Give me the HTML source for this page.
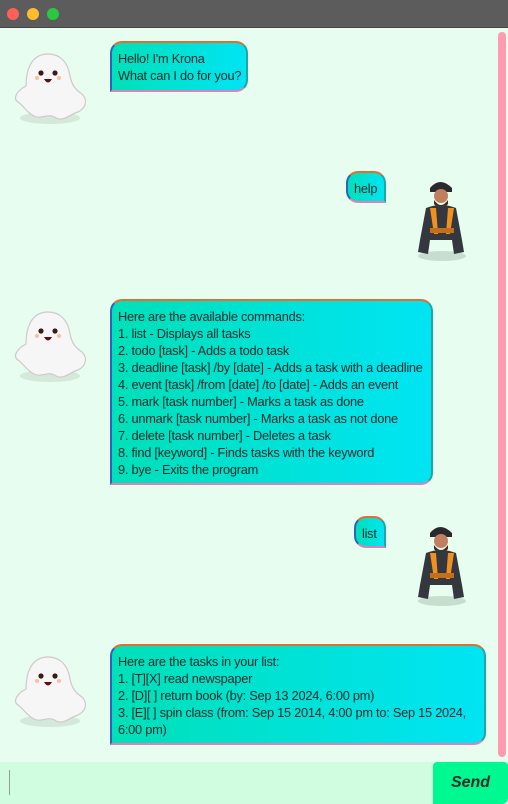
<!DOCTYPE html><html><head><style>
*{margin:0;padding:0;box-sizing:border-box}
body{width:508px;height:804px;background:#e6fdef;font-family:"Liberation Sans",sans-serif;position:relative;overflow:hidden}
.tb{position:absolute;left:0;top:0;width:508px;height:28px;background:#5c5c5c;border-bottom:1px solid #444}
.d{position:absolute;top:8px;width:12px;height:12px;border-radius:50%}
.b{position:absolute;background:linear-gradient(90deg,#00e0b8,#00e4f4);border:2px solid;border-color:#e07030 #20a8a0 #e080b8 #3060c0;border-radius:12px 12px 12px 0;font-size:12.8px;letter-spacing:-0.25px;white-space:nowrap;line-height:17px;color:#1e2a2a;padding:7px 6px}
.r{border-radius:12px 12px 0 12px}
.g{position:absolute}
.m{position:absolute}
</style></head><body>
<div class="tb"><div class="d" style="left:7px;background:#fe5f57"></div><div class="d" style="left:27px;background:#febc2e"></div><div class="d" style="left:47px;background:#28c840"></div></div>
<div style="position:absolute;left:498px;top:32px;width:8px;height:725px;background:#ff9ab0;border-radius:4px"></div>

<svg width="0" height="0" style="position:absolute"><defs>
<g id="ghost"><ellipse cx="42" cy="72" rx="30" ry="6" fill="#c8dccc" opacity=".6"/><path d="M40 8C22 8 18 26 18 40C10 44 4 52 10 56C16 60 18 66 26 70C34 74 40 66 48 72C56 76 62 68 70 66C78 62 80 54 74 48C68 44 64 40 62 30C60 16 52 8 40 8Z" fill="#f6f6f6" stroke="#d0c8cc" stroke-width="1.2"/><circle cx="33" cy="27" r="2.6" fill="#3a1a1a"/><circle cx="47" cy="27" r="2.6" fill="#3a1a1a"/><path d="M36 33Q40 40 44 33Z" fill="#5a1010"/><circle cx="29" cy="32" r="2" fill="#f8c0a0"/><circle cx="51" cy="32" r="2" fill="#f8c0a0"/></g>
<g id="man"><ellipse cx="34" cy="82" rx="24" ry="5" fill="#b8d0c0" opacity=".7"/><path d="M22 14Q32 2 44 14L44 18L22 18Z" fill="#2a2a2e"/><circle cx="33" cy="22" r="7" fill="#c08060"/><path d="M26 26Q33 36 40 26L40 30Q33 38 26 30Z" fill="#4a2a1a"/><path d="M18 34Q33 28 48 34L54 66L56 78L46 80L44 66L22 66L20 80L10 78L12 66Z" fill="#34383e"/><path d="M22 34L26 60L30 60L28 34ZM40 34L38 60L42 60L46 34Z" fill="#f09020"/><rect x="22" y="54" width="24" height="5" fill="#c07018"/></g>
</defs></svg>

<svg class="g" style="left:8px;top:46px" width="90" height="88"><use href="#ghost"/></svg>
<div class="b" style="left:110px;top:41px;width:138px;height:51px">Hello! I'm Krona<br>What can I do for you?</div>

<div class="b r" style="left:346px;top:171px;width:40px;height:32px">help</div>
<svg class="m" style="left:408px;top:174px" width="70" height="92"><use href="#man"/></svg>

<svg class="g" style="left:8px;top:304px" width="90" height="88"><use href="#ghost"/></svg>
<div class="b" style="left:110px;top:299px;width:323px;height:186px">Here are the available commands:<br>1. list - Displays all tasks<br>2. todo [task] - Adds a todo task<br>3. deadline [task] /by [date] - Adds a task with a deadline<br>4. event [task] /from [date] /to [date] - Adds an event<br>5. mark [task number] - Marks a task as done<br>6. unmark [task number] - Marks a task as not done<br>7. delete [task number] - Deletes a task<br>8. find [keyword] - Finds tasks with the keyword<br>9. bye - Exits the program</div>

<div class="b r" style="left:354px;top:516px;width:32px;height:32px">list</div>
<svg class="m" style="left:408px;top:519px" width="70" height="92"><use href="#man"/></svg>

<svg class="g" style="left:8px;top:649px" width="90" height="88"><use href="#ghost"/></svg>
<div class="b" style="left:110px;top:644px;width:376px;height:101px">Here are the tasks in your list:<br>1. [T][X] read newspaper<br>2. [D][ ] return book (by: Sep 13 2024, 6:00 pm)<br>3. [E][ ] spin class (from: Sep 15 2014, 4:00 pm to: Sep 15 2024,<br>6:00 pm)</div>

<div style="position:absolute;left:0;top:762px;width:433px;height:42px;background:#d0fde0"></div>
<div style="position:absolute;left:9px;top:770px;width:1px;height:25px;background:#999"></div>
<div style="position:absolute;left:433px;top:762px;width:75px;height:42px;background:#00f890;border-radius:4px 4px 6px 0;font:italic bold 16px 'Liberation Sans',sans-serif;color:#1e2a2a;text-align:center;line-height:42px">Send</div>
</body></html>
